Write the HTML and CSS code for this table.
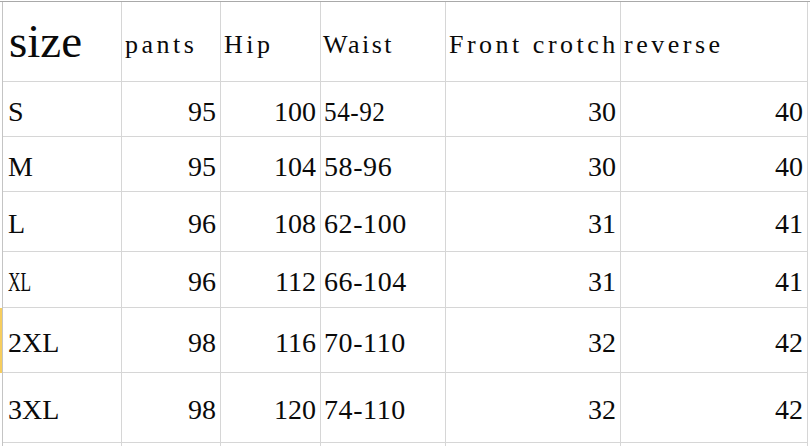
FILE: index.html
```html
<!DOCTYPE html>
<html>
<head>
<meta charset="utf-8">
<link rel="stylesheet" href="styles.css">
</head>
<body>
<div class="sheet">
  <div class="g"></div>
  <div class="c hd size">size</div>
  <div class="c hd">pants</div>
  <div class="c hd">Hip</div>
  <div class="c hd waist">Waist</div>
  <div class="c hd">Front crotch</div>
  <div class="c hd">reverse</div>

  <div class="g"></div>
  <div class="c">S</div>
  <div class="c num">95</div>
  <div class="c num">100</div>
  <div class="c rng"><span class="narrow">54-92</span></div>
  <div class="c num">30</div>
  <div class="c num">40</div>

  <div class="g"></div>
  <div class="c">M</div>
  <div class="c num">95</div>
  <div class="c num">104</div>
  <div class="c rng">58-96</div>
  <div class="c num">30</div>
  <div class="c num">40</div>

  <div class="g"></div>
  <div class="c">L</div>
  <div class="c num">96</div>
  <div class="c num">108</div>
  <div class="c rng">62-100</div>
  <div class="c num">31</div>
  <div class="c num">41</div>

  <div class="g"></div>
  <div class="c"><span class="cond">XL</span></div>
  <div class="c num">96</div>
  <div class="c num">112</div>
  <div class="c rng">66-104</div>
  <div class="c num">31</div>
  <div class="c num">41</div>

  <div class="g sel"></div>
  <div class="c">2XL</div>
  <div class="c num">98</div>
  <div class="c num">116</div>
  <div class="c rng">70-110</div>
  <div class="c num">32</div>
  <div class="c num">42</div>

  <div class="g"></div>
  <div class="c">3XL</div>
  <div class="c num">98</div>
  <div class="c num">120</div>
  <div class="c rng">74-110</div>
  <div class="c num">32</div>
  <div class="c num">42</div>

  <div class="g"></div>
  <div class="c"></div>
  <div class="c"></div>
  <div class="c"></div>
  <div class="c"></div>
  <div class="c"></div>
  <div class="c"></div>
</div>
</body>
</html>
```
FILE: styles.css
```css
html, body {
  margin: 0;
  padding: 0;
  background: #ffffff;
  overflow: hidden;
}

.sheet {
  margin-top: 1px;
  border-top: 1px solid #a9a9a9;
  display: grid;
  grid-template-columns: 3px 119px 99px 100px 125px 175px 187px;
  grid-template-rows: 80px 55px 55px 60px 56px 65px 70px 40px;
  font-family: "Liberation Serif", "Times New Roman", serif;
  color: #0a0a0a;
}

.g {
  border-right: 1px solid #c4c4c4;
  box-sizing: border-box;
}

.g.sel {
  background: #f6cd5e;
}

.c {
  box-sizing: border-box;
  border-right: 1px solid #d6d6d6;
  border-bottom: 1px solid #d6d6d6;
  display: flex;
  align-items: center;
  padding: 5px 4px 0 5px;
  font-size: 28px;
  line-height: 28px;
  white-space: nowrap;
  overflow: visible;
}

.c.num {
  justify-content: flex-end;
}

.c.rng {
  padding-left: 3px;
  letter-spacing: 0.6px;
}

.c.hd {
  font-size: 26px;
  line-height: 26px;
  letter-spacing: 3.5px;
  padding: 7px 0 0 3px;
}

.c.hd.waist {
  padding-left: 2px;
  letter-spacing: 2.5px;
}

.c.hd.size {
  font-size: 47px;
  line-height: 47px;
  letter-spacing: 0;
  padding: 0 0 0 6px;
}

.cond {
  display: inline-block;
  transform: scaleX(0.62);
  transform-origin: left center;
}

.narrow {
  display: inline-block;
  transform: scaleX(0.9);
  transform-origin: left center;
}
```
